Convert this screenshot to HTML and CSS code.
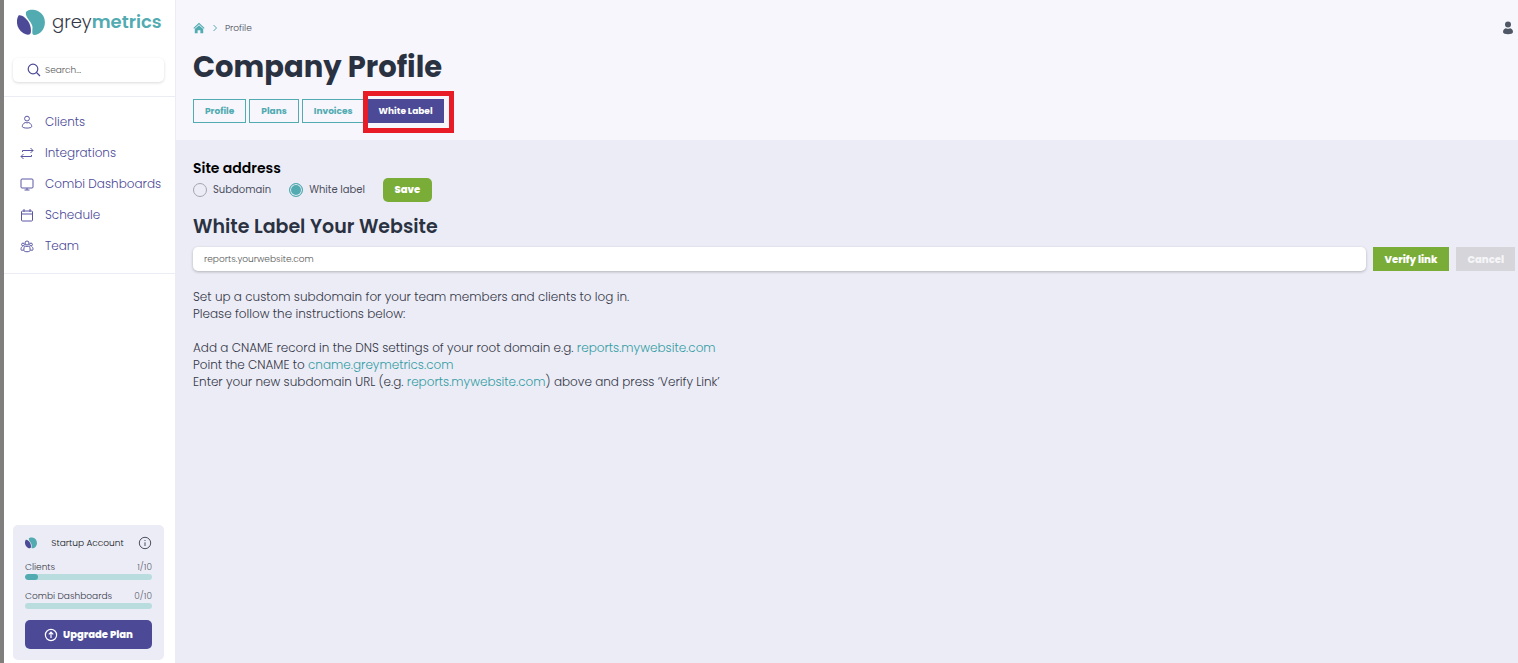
FILE: index.html
```html
<!DOCTYPE html>
<html lang="en">
<head>
<meta charset="utf-8">
<meta name="viewport" content="width=device-width, initial-scale=1">
<title>Company Profile – greymetrics</title>
<link rel="stylesheet" href="styles.css">
</head>
<body>
<svg class="defs" aria-hidden="true">
  <symbol id="mark" viewBox="0 0 28 27">
    <path fill="#4c4a97" d="M1.500 6.500C4 5 8.500 8.500 11 12C13.500 15.500 14.300 20 13.800 23.500C13.300 26.500 9.500 26 6.500 24.300C-.5 20.500-1.500 11.500 1.500 6.500Z"/>
    <path fill="#51abb1" d="M8.800 4.200C8.800 1.500 12.500 .3 16.500 .8C23.500 1.700 28 7 27.900 13.500C27.800 21 22.500 26 17.200 26C14.500 26 15.500 22 15.500 18C15.300 13.500 9 9.500 8.800 4.200Z"/>
  </symbol>
</svg>
<div class="app">
  <aside class="sidebar">
    <div class="brand">
      <a class="logo" href="#"><svg class="logo-mark" aria-hidden="true"><use href="#mark"/></svg><span>grey<b>metrics</b></span></a>
      <label class="search">
        <svg viewBox="0 0 14 14" aria-hidden="true"><circle cx="6" cy="6" r="4.800"/><path d="M9.500 9.500L13 13"/></svg>
        <input type="search" placeholder="Search..." aria-label="Search">
      </label>
    </div>
    <nav class="menu">
      <a href="#"><svg viewBox="0 0 14 14"><circle cx="7" cy="3.600" r="2.400"/><path d="M5.200 7.500C3.200 8.500 2.300 10 2.300 11.500C2.300 13.600 11.700 13.600 11.700 11.500C11.700 10 10.800 8.500 8.800 7.500C7.700 8 6.300 8 5.200 7.500Z"/></svg>Clients</a>
      <a href="#"><svg viewBox="0 0 14 14"><path d="M2.500 6V4.500H13M10.500 2L13 4.500L10.500 7M11.500 9V10.500H1M3.500 8L1 10.500L3.500 13"/></svg>Integrations</a>
      <a href="#"><svg viewBox="0 0 14 14"><rect x="1" y="2" width="12" height="9" rx="1"/><path d="M4.500 13H9.500M6 12H8"/></svg>Combi Dashboards</a>
      <a href="#"><svg viewBox="0 0 14 14"><rect x="1.500" y="3" width="11" height="10" rx="1"/><path d="M1.500 6H12.500M4 1V4M10 1V4"/></svg>Schedule</a>
      <a href="#"><svg viewBox="0 0 14 14"><circle cx="7" cy="4" r="2"/><circle cx="3" cy="5.500" r="1.400"/><circle cx="11" cy="5.500" r="1.400"/><path d="M5.200 7C3.500 8.200 3.500 12 4.500 12.300C6 12.900 8 12.900 9.500 12.300C10.500 12 10.500 8.200 8.800 7C7.500 7.700 6.500 7.700 5.200 7ZM2.300 7.500C.8 8.500.8 10.500 1.300 11.200H3.500M11.700 7.500C13.200 8.500 13.200 10.500 12.700 11.200H10.500"/></svg>Team</a>
    </nav>
    <section class="account">
      <div class="account-head">
        <svg class="mini-mark" aria-hidden="true"><use href="#mark"/></svg>
        <span>Startup Account</span>
        <svg class="info" viewBox="0 0 14 14" aria-hidden="true"><circle cx="7" cy="7" r="5.700"/><path d="M7 6.300V10M7 4V5"/></svg>
      </div>
      <div class="quota"><div class="quota-label"><span>Clients</span><span class="count">1/10</span></div><div class="bar"><div class="fill" style="width:10%"></div></div></div>
      <div class="quota"><div class="quota-label"><span>Combi Dashboards</span><span class="count">0/10</span></div><div class="bar"></div></div>
      <button class="upgrade" type="button"><svg viewBox="0 0 14 14" aria-hidden="true"><circle cx="7" cy="7" r="5.600"/><path d="M7 10V4.300M4.800 6.400L7 4.200L9.200 6.400"/></svg>Upgrade Plan</button>
    </section>
  </aside>
  <div class="page">
    <header class="header">
      <div class="topline">
        <nav class="crumbs" aria-label="Breadcrumb">
          <a href="#" aria-label="Home"><svg class="home" viewBox="0 0 12 12"><path d="M6 .8L11.600 6L10.800 6.700L6 2.300L1.200 6.700L.4 6Z"/><path d="M6 3.200L10.200 7V11.200H7.400V8.200H4.600V11.200H1.800V7Z"/></svg></a>
          <svg class="chevron" viewBox="0 0 6 8"><path d="M1.500 1L4.500 4L1.500 7"/></svg>
          <span>Profile</span>
        </nav>
        <button class="user" type="button" aria-label="Account"><svg viewBox="0 0 12 14"><circle cx="6" cy="3.500" r="3"/><path d="M1 11C1 8.500 3 7.500 4 7.300Q6 8.300 8 7.300C9 7.500 11 8.500 11 11C11 14 1 14 1 11Z"/></svg></button>
      </div>
      <h1>Company Profile</h1>
      <div class="tabs">
        <button type="button">Profile</button>
        <button type="button">Plans</button>
        <button type="button">Invoices</button>
        <div class="marked"><button class="active" type="button">White Label</button></div>
      </div>
    </header>
    <main class="content">
      <h3>Site address</h3>
      <form class="address">
        <label><input type="radio" name="address">Subdomain</label>
        <label><input type="radio" name="address" checked>White label</label>
        <button class="save" type="button">Save</button>
      </form>
      <h2>White Label Your Website</h2>
      <form class="verify">
        <input type="text" placeholder="reports.yourwebsite.com" aria-label="Website address">
        <button type="button">Verify link</button>
        <button class="cancel" type="button">Cancel</button>
      </form>
      <p>Set up a custom subdomain for your team members and clients to log in.<br>Please follow the instructions below:</p>
      <p>Add a CNAME record in the DNS settings of your root domain e.g. <a href="#">reports.mywebsite.com</a><br>Point the CNAME to <a href="#">cname.greymetrics.com</a><br>Enter your new subdomain URL (e.g. <a href="#">reports.mywebsite.com</a>) above and press ‘Verify Link’</p>
    </main>
  </div>
</div>
</body>
</html>
```
FILE: styles.css
```css
* { box-sizing: border-box; }
body {
  margin: 0;
  font-family: Poppins, Inter, "Open Sans", sans-serif;
  font-size: 12px;
  font-weight: 300;
  line-height: 17px;
  color: #343847;
  background: #ececf6;
}
button, input { font: inherit; }
button { border: 0; padding: 0; cursor: pointer; }
a { text-decoration: none; }
svg { flex: none; }
.defs { position: absolute; width: 0; height: 0; }
.app { display: flex; min-height: 100vh; border-left: 4px solid #817f7d; overflow: hidden; }

.sidebar {
  display: flex;
  flex-direction: column;
  flex: none;
  width: 172px;
  background: #fff;
  border-right: 1px solid #ececf4;
}
.brand { padding: 8px 11px 14px 9px; border-bottom: 1px solid #ececf4; }
.logo { display: flex; align-items: center; gap: 7px; padding-left: 4px; font-size: 18px; line-height: 28px; color: #343847; }
.logo b { color: #51abb1; font-weight: 600; }
.logo-mark { width: 28px; height: 27px; }
.search {
  display: flex;
  align-items: center;
  gap: 4px;
  height: 24px;
  margin-top: 22px;
  padding: 0 14px;
  border-radius: 5px;
  box-shadow: 0 1px 3px #00000026;
}
.search svg { width: 14px; height: 14px; fill: none; stroke: #4c4a97; stroke-width: 1.2; }
.search input { width: 100%; min-width: 0; border: 0; padding: 0; background: none; outline: 0; font-size: 9px; }
input::placeholder { color: #555; opacity: 1; }
.menu { display: flex; flex-direction: column; gap: 14px; padding: 16px 0 19px 16px; border-bottom: 1px solid #ececf4; }
.menu a { display: flex; align-items: center; gap: 11px; color: #4c4a97; white-space: nowrap; line-height: 17px; }
.menu svg { width: 14px; height: 14px; fill: none; stroke: #5a57a2; stroke-width: 1; }

.account { margin: auto 11px 3px 9px; padding: 10px 12px 11px; border-radius: 5px; background: #ececf6; font-size: 9px; line-height: 14px; }
.account-head { display: flex; align-items: center; justify-content: space-between; height: 16px; margin-bottom: 9px; color: #101420; }
.mini-mark { width: 12px; height: 12px; }
.info { width: 14px; height: 14px; fill: none; stroke: #4c5060; }
.quota { margin-bottom: 9px; }
.quota-label { display: flex; justify-content: space-between; }
.count { color: #5c606c; }
.bar { height: 6px; border-radius: 3px; background: #b9dddf; overflow: hidden; }
.fill { height: 6px; border-radius: 3px; background: #51abb1; }
.upgrade {
  display: flex;
  align-items: center;
  justify-content: center;
  gap: 5px;
  width: 100%;
  height: 29px;
  margin-top: 11px;
  border-radius: 5px;
  background: #4c4a97;
  color: #fff;
  font-size: 10px;
  font-weight: 800;
}
.upgrade svg { width: 14px; height: 14px; fill: none; stroke: #fff; stroke-width: 1.2; }

.page { flex: 1; min-width: 0; }
.header { padding: 18px 4px 17px 17px; background: #f6f6fc; }
.topline { display: flex; justify-content: space-between; height: 20px; }
.crumbs { display: flex; align-items: center; gap: 7px; font-size: 9px; color: #444856; }
.crumbs a { display: flex; }
.home { width: 12px; height: 12px; fill: #51abb1; }
.chevron { width: 6px; height: 8px; fill: none; stroke: #51abb1; }
.user { display: flex; align-items: center; background: none; }
.user svg { width: 12px; height: 14px; fill: #4f5766; }
h1, h2, h3, p { margin: 0; }
h1 { margin-top: 9px; font-size: 29px; font-weight: 700; line-height: 40px; color: #2a3242; }
.tabs { display: flex; gap: 3px; margin-top: 12px; }
.tabs button {
  height: 24px;
  padding: 0 11px;
  border: 1px solid #51abb1;
  background: transparent;
  color: #51abb1;
  font-size: 9px;
  font-weight: 700;
  white-space: nowrap;
}
.tabs .active { padding: 0 10px; border-color: #4c4a97; background: #4c4a97; color: #fff; }
.marked { position: relative; }
.marked::after { content: ""; position: absolute; inset: -8px -10px -10px -5px; border: 5px solid #e81c27; pointer-events: none; }

.content { padding: 18px 3px 18px 17px; }
h3 { font-size: 14px; font-weight: 600; line-height: 20px; color: #000; }
.address { display: flex; align-items: center; font-size: 10px; font-weight: 400; line-height: 16px; color: #4c5060; }
.address label { display: flex; align-items: center; gap: 6px; margin-right: 18px; }
.address input {
  appearance: none;
  width: 14px;
  height: 14px;
  margin: 0;
  border: 1px solid #a3a5af;
  border-radius: 50%;
}
.address input:checked { border-color: #51abb1; background: #51abb1; box-shadow: inset 0 0 0 1px #ececf6; }
.save, .verify button { height: 24px; background: #7aac38; color: #fff; font-size: 10px; font-weight: 800; white-space: nowrap; }
.save { width: 49px; border-radius: 5px; }
h2 { margin-top: 11px; font-size: 19px; font-weight: 600; line-height: 28px; color: #2a3242; }
.verify { display: flex; gap: 7px; margin: 6px 0 17px; }
.verify input { flex: 1; min-width: 0; height: 24px; padding: 0 11px; border: 0; border-radius: 5px; background: #fff; box-shadow: 0 1px 3px #00000040; font-size: 9px; }
.verify button { padding: 0 12px; }
.verify .cancel { padding: 0 11px; background: #d5d5da; color: #f5f5f8; }
p + p { margin-top: 17px; }
p a { color: #319ca3; }
```
